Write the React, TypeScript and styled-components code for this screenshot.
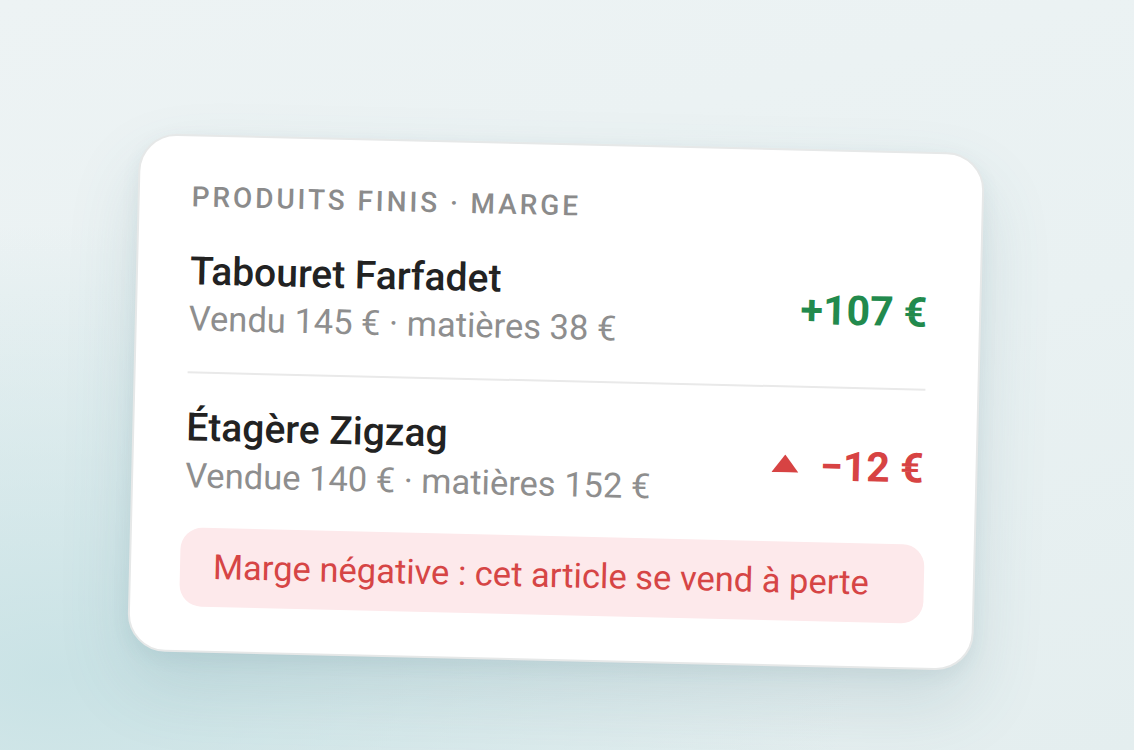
import React from 'react';
import styled, { createGlobalStyle } from 'styled-components';

type Product = {
  name: string;
  detail: string;
  margin: string;
  negative?: boolean;
};

const products: Product[] = [
  { name: 'Tabouret Farfadet', detail: 'Vendu 145 € · matières 38 €', margin: '+107 €' },
  { name: 'Étagère Zigzag', detail: 'Vendue 140 € · matières 152 €', margin: '−12 €', negative: true },
];

export default function App() {
  return (
    <>
      <GlobalStyle />
      <Page>
        <Card>
          <Heading>Produits finis · Marge</Heading>
          {products.map((product, index) => (
            <Row key={product.name} $last={index === products.length - 1}>
              <Info>
                <Name>{product.name}</Name>
                <Detail>{product.detail}</Detail>
              </Info>
              <Amount $negative={product.negative}>
                {product.negative && (
                  <Warning viewBox="0 0 27 18" aria-hidden="true">
                    <path d="M13.5 0 L27 18 L0 18 Z" fill="currentColor" />
                  </Warning>
                )}
                {product.margin}
              </Amount>
            </Row>
          ))}
          <Alert>Marge négative : cet article se vend à perte</Alert>
        </Card>
      </Page>
    </>
  );
}

const GlobalStyle = createGlobalStyle`
  html, body {
    margin: 0;
    padding: 0;
  }
  body {
    font-family: Roboto, "Liberation Sans", sans-serif;
  }
  * {
    box-sizing: border-box;
  }
`;

const Page = styled.div`
  width: 1134px;
  height: 750px;
  overflow: hidden;
  display: flex;
  align-items: center;
  justify-content: center;
  padding: 54px 22px 0 0;
  background:
    radial-gradient(ellipse 70% 60% at 5% 90%, rgba(196, 224, 227, 0.85) 0%, rgba(196, 224, 227, 0) 100%),
    linear-gradient(165deg, #edf3f4 0%, #e9f1f2 55%, #e4eeef 100%);
`;

const Card = styled.div`
  width: 846px;
  padding: 44px 52px 44px;
  background: #fff;
  border: 2px solid #e6e8e8;
  border-radius: 38px;
  box-shadow: 0 34px 70px rgba(70, 120, 128, 0.16), 0 6px 18px rgba(70, 120, 128, 0.08);
  transform: rotate(1.35deg);
`;

const Heading = styled.div`
  margin-bottom: 3px;
  font-size: 28px;
  line-height: 1.2;
  font-weight: 500;
  letter-spacing: 2.9px;
  text-transform: uppercase;
  color: #8b8b8b;
`;

const Row = styled.div<{ $last: boolean }>`
  display: flex;
  align-items: center;
  justify-content: space-between;
  padding: 31px 0 31px;
  border-bottom: ${p => (p.$last ? 'none' : '2px solid #e9e9e9')};
`;

const Info = styled.div`
  display: flex;
  flex-direction: column;
  gap: 4px;
`;

const Name = styled.div`
  font-size: 39px;
  line-height: 1.2;
  font-weight: 500;
  color: #222;
`;

const Detail = styled.div`
  font-size: 34.5px;
  line-height: 1.2;
  color: #8e8e8e;
`;

const Amount = styled.div<{ $negative?: boolean }>`
  display: flex;
  align-items: center;
  gap: 21px;
  margin-top: 4px;
  font-size: 41px;
  line-height: 1.2;
  font-weight: 700;
  color: ${p => (p.$negative ? '#d74343' : '#228a4d')};
`;

const Warning = styled.svg`
  width: 27px;
  height: 18px;
  margin-top: -6px;
`;

const Alert = styled.div`
  margin: 0 -3px;
  padding: 19px 30px 19px 33px;
  border-radius: 22px;
  background: #fde9eb;
  color: #d64545;
  font-size: 34.5px;
  line-height: 1.2;
`;
